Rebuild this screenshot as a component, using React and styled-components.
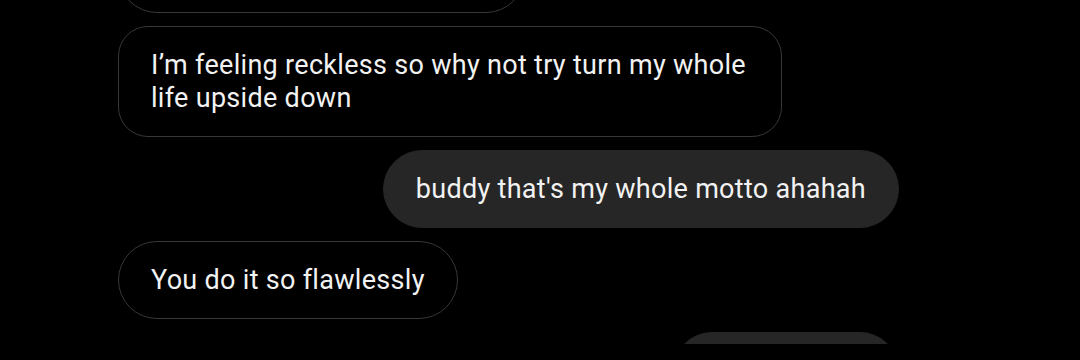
import React from "react";
import styled, { createGlobalStyle } from "styled-components";

const GlobalStyle = createGlobalStyle`
  html, body {
    margin: 0;
    padding: 0;
    background: #000;
  }
`;

const Screen = styled.div`
  width: 1080px;
  height: 360px;
  background: #000;
`;

const Viewport = styled.div`
  height: 344px;
  overflow: hidden;
`;

const Thread = styled.div`
  display: flex;
  flex-direction: column;
  gap: 13px;
  padding: 0 181px 0 118px;
  margin-top: ${(p) => -p.scroll}px;
`;

const Bubble = styled.div`
  box-sizing: border-box;
  align-self: ${(p) => (p.mine ? "flex-end" : "flex-start")};
  max-width: 664px;
  padding: 22px 32px 21px;
  border-radius: ${(p) => (p.multiline ? "30px" : "39px")};
  border: 1px solid ${(p) => (p.mine ? "#262626" : "#383838")};
  background: ${(p) => (p.mine ? "#262626" : "#000")};
  color: #f2f2f2;
  font-family: Roboto, "Liberation Sans", sans-serif;
  font-size: 27px;
  letter-spacing: 0.3px;
  line-height: 33px;
`;

const messages = [
  { text: "that sounds so fun honestly" },
  {
    text: "I\u2019m feeling reckless so why not try turn my whole life upside down",
    multiline: true,
  },
  { text: "buddy that's my whole motto ahahah", mine: true },
  { text: "You do it so flawlessly" },
  { text: "it's a true gift", mine: true },
];

export default function App() {
  return (
    <Screen>
      <GlobalStyle />
      <Viewport>
        <Thread scroll={65}>
          {messages.map((m, i) => (
            <Bubble key={i} mine={m.mine} multiline={m.multiline}>
              {m.text}
            </Bubble>
          ))}
        </Thread>
      </Viewport>
    </Screen>
  );
}
